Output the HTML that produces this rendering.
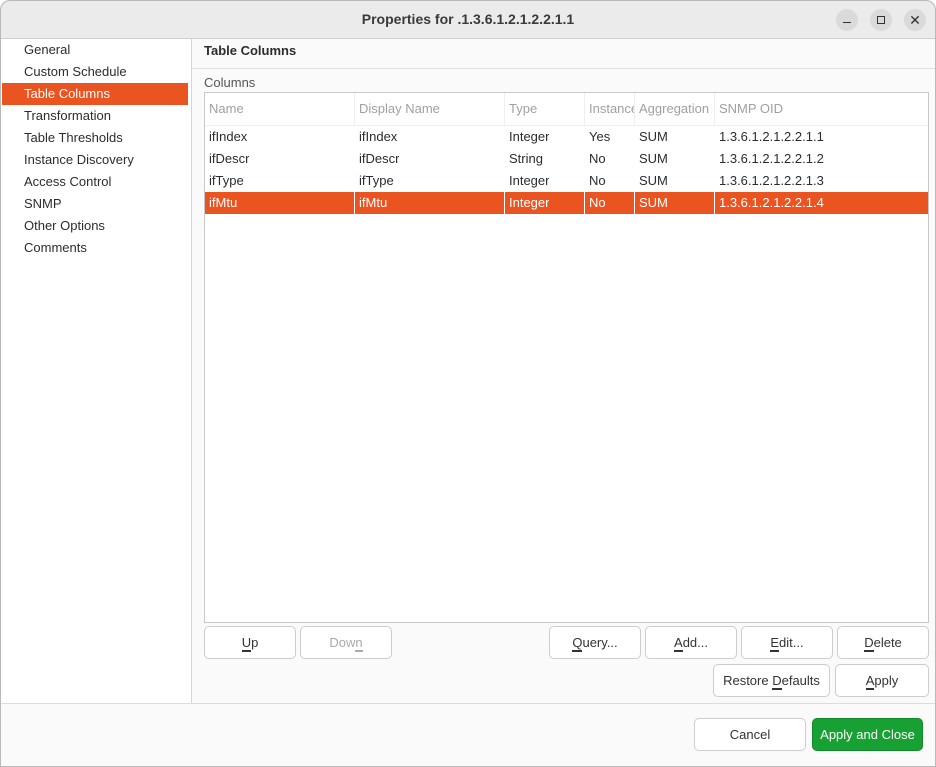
<!DOCTYPE html>
<html><head><meta charset="utf-8"><style>
*{box-sizing:border-box;margin:0;padding:0}
body{width:936px;height:767px;background:#fff;font-family:"Liberation Sans",sans-serif;font-size:13px;color:#333;position:relative;overflow:hidden}
.win{position:absolute;left:0;top:0;width:936px;height:767px;border-radius:10px 10px 0 0;background:#fafafa;overflow:hidden}
.frame{position:absolute;left:0;top:0;width:936px;height:767px;border:1px solid #b9b9b9;border-radius:10px 10px 0 0;pointer-events:none;z-index:5}
.title{position:absolute;left:0;top:0;width:100%;height:39px;background:#ebebeb;border-bottom:1px solid #cfcfcf;text-align:center;line-height:38px;font-weight:bold;font-size:14px;color:#3a3a3a}
.wb{position:absolute;top:9px;width:22px;height:22px;border-radius:50%;background:#dadada}
.side{position:absolute;left:1px;top:39px;width:191px;height:664px;background:#fff;border-right:1px solid #d6d6d6}
.side div{position:absolute;left:1px;width:186px;height:22px;line-height:22px;padding-left:22px;color:#2c2c2c}
.side .sel{background:#e95420;color:#fff}
.a{position:absolute}
.tbl{position:absolute;left:204px;top:92px;width:725px;height:531px;background:#fff;border:1px solid #c8c8c8}
.cell{position:absolute;height:22px;line-height:22px;padding-left:4px;white-space:nowrap;overflow:hidden;color:#2c2c2c}
.hd{color:#a0a0a0;height:32px;line-height:32px}
.row{position:absolute;left:0;width:723px;height:22px}
.row.s{background:#e95420}
.row.s .cell{color:#fff}
.vs{position:absolute;top:0;width:1px;height:22px;background:#fff}
.btn{position:absolute;height:33px;border:1px solid #cdcdcd;border-radius:5px;background:#fff;text-align:center;line-height:31px;color:#333}
.btn u{text-decoration:none;border-bottom:2px solid #333}
</style></head><body>
<div class="win">
<div class="title">Properties for .1.3.6.1.2.1.2.2.1.1</div>
<div class="wb" style="left:836px"><div style="position:absolute;left:7px;top:13px;width:8px;height:1px;background:#333"></div></div>
<div class="wb" style="left:870px"><div style="position:absolute;left:7px;top:7px;width:8px;height:8px;border:1px solid #333"></div></div>
<div class="wb" style="left:904px;text-align:center;line-height:22px;font-size:14px;color:#333">✕</div>
<div class="side">
<div style="top:0">General</div>
<div style="top:22px">Custom Schedule</div>
<div class="sel" style="top:44px">Table Columns</div>
<div style="top:66px">Transformation</div>
<div style="top:88px">Table Thresholds</div>
<div style="top:110px">Instance Discovery</div>
<div style="top:132px">Access Control</div>
<div style="top:154px">SNMP</div>
<div style="top:176px">Other Options</div>
<div style="top:198px">Comments</div>
</div>
<div class="a" style="left:204px;top:43px;font-weight:bold;color:#2c2c2c">Table Columns</div>
<div class="a" style="left:192px;top:68px;width:744px;height:1px;background:#e0e0e0"></div>
<div class="a" style="left:204px;top:75px;color:#555">Columns</div>
<div class="tbl">
<div class="a" style="left:0;top:32px;width:723px;height:1px;background:#eee"></div>
<div class="cell hd" style="left:0;top:0">Name</div>
<div class="cell hd" style="left:150px;top:0">Display Name</div>
<div class="cell hd" style="left:300px;top:0">Type</div>
<div class="cell hd" style="left:380px;top:0;width:50px">Instance</div>
<div class="cell hd" style="left:430px;top:0;width:80px">Aggregation</div>
<div class="cell hd" style="left:510px;top:0">SNMP OID</div>
<div class="a" style="left:149px;top:0;width:1px;height:32px;background:#eee"></div>
<div class="a" style="left:299px;top:0;width:1px;height:32px;background:#eee"></div>
<div class="a" style="left:379px;top:0;width:1px;height:32px;background:#eee"></div>
<div class="a" style="left:429px;top:0;width:1px;height:32px;background:#eee"></div>
<div class="a" style="left:509px;top:0;width:1px;height:32px;background:#eee"></div>
<div class="row" style="top:33px"><div class="cell" style="left:0">ifIndex</div><div class="cell" style="left:150px">ifIndex</div><div class="cell" style="left:300px">Integer</div><div class="cell" style="left:380px">Yes</div><div class="cell" style="left:430px">SUM</div><div class="cell" style="left:510px">1.3.6.1.2.1.2.2.1.1</div></div>
<div class="row" style="top:55px"><div class="cell" style="left:0">ifDescr</div><div class="cell" style="left:150px">ifDescr</div><div class="cell" style="left:300px">String</div><div class="cell" style="left:380px">No</div><div class="cell" style="left:430px">SUM</div><div class="cell" style="left:510px">1.3.6.1.2.1.2.2.1.2</div></div>
<div class="row" style="top:77px"><div class="cell" style="left:0">ifType</div><div class="cell" style="left:150px">ifType</div><div class="cell" style="left:300px">Integer</div><div class="cell" style="left:380px">No</div><div class="cell" style="left:430px">SUM</div><div class="cell" style="left:510px">1.3.6.1.2.1.2.2.1.3</div></div>
<div class="row s" style="top:99px"><div class="cell" style="left:0">ifMtu</div><div class="cell" style="left:150px">ifMtu</div><div class="cell" style="left:300px">Integer</div><div class="cell" style="left:380px">No</div><div class="cell" style="left:430px">SUM</div><div class="cell" style="left:510px">1.3.6.1.2.1.2.2.1.4</div>
<div class="vs" style="left:149px"></div><div class="vs" style="left:299px"></div><div class="vs" style="left:379px"></div><div class="vs" style="left:429px"></div><div class="vs" style="left:509px"></div></div>
</div>
<div class="btn" style="left:204px;top:626px;width:92px"><u>U</u>p</div>
<div class="btn" style="left:300px;top:626px;width:92px;color:#aaa">Dow<u style="border-color:#aaa">n</u></div>
<div class="btn" style="left:549px;top:626px;width:92px"><u>Q</u>uery...</div>
<div class="btn" style="left:645px;top:626px;width:92px"><u>A</u>dd...</div>
<div class="btn" style="left:741px;top:626px;width:92px"><u>E</u>dit...</div>
<div class="btn" style="left:837px;top:626px;width:92px"><u>D</u>elete</div>
<div class="btn" style="left:713px;top:664px;width:117px">Restore <u>D</u>efaults</div>
<div class="btn" style="left:835px;top:664px;width:94px"><u>A</u>pply</div>
<div class="a" style="left:0;top:703px;width:936px;height:1px;background:#dcdcdc"></div>
<div class="btn" style="left:694px;top:718px;width:112px">Cancel</div>
<div class="btn" style="left:812px;top:718px;width:111px;background:#18a133;border-color:#138a2a;color:#fff">Apply and Close</div>
</div>
<div class="frame"></div>
</body></html>
